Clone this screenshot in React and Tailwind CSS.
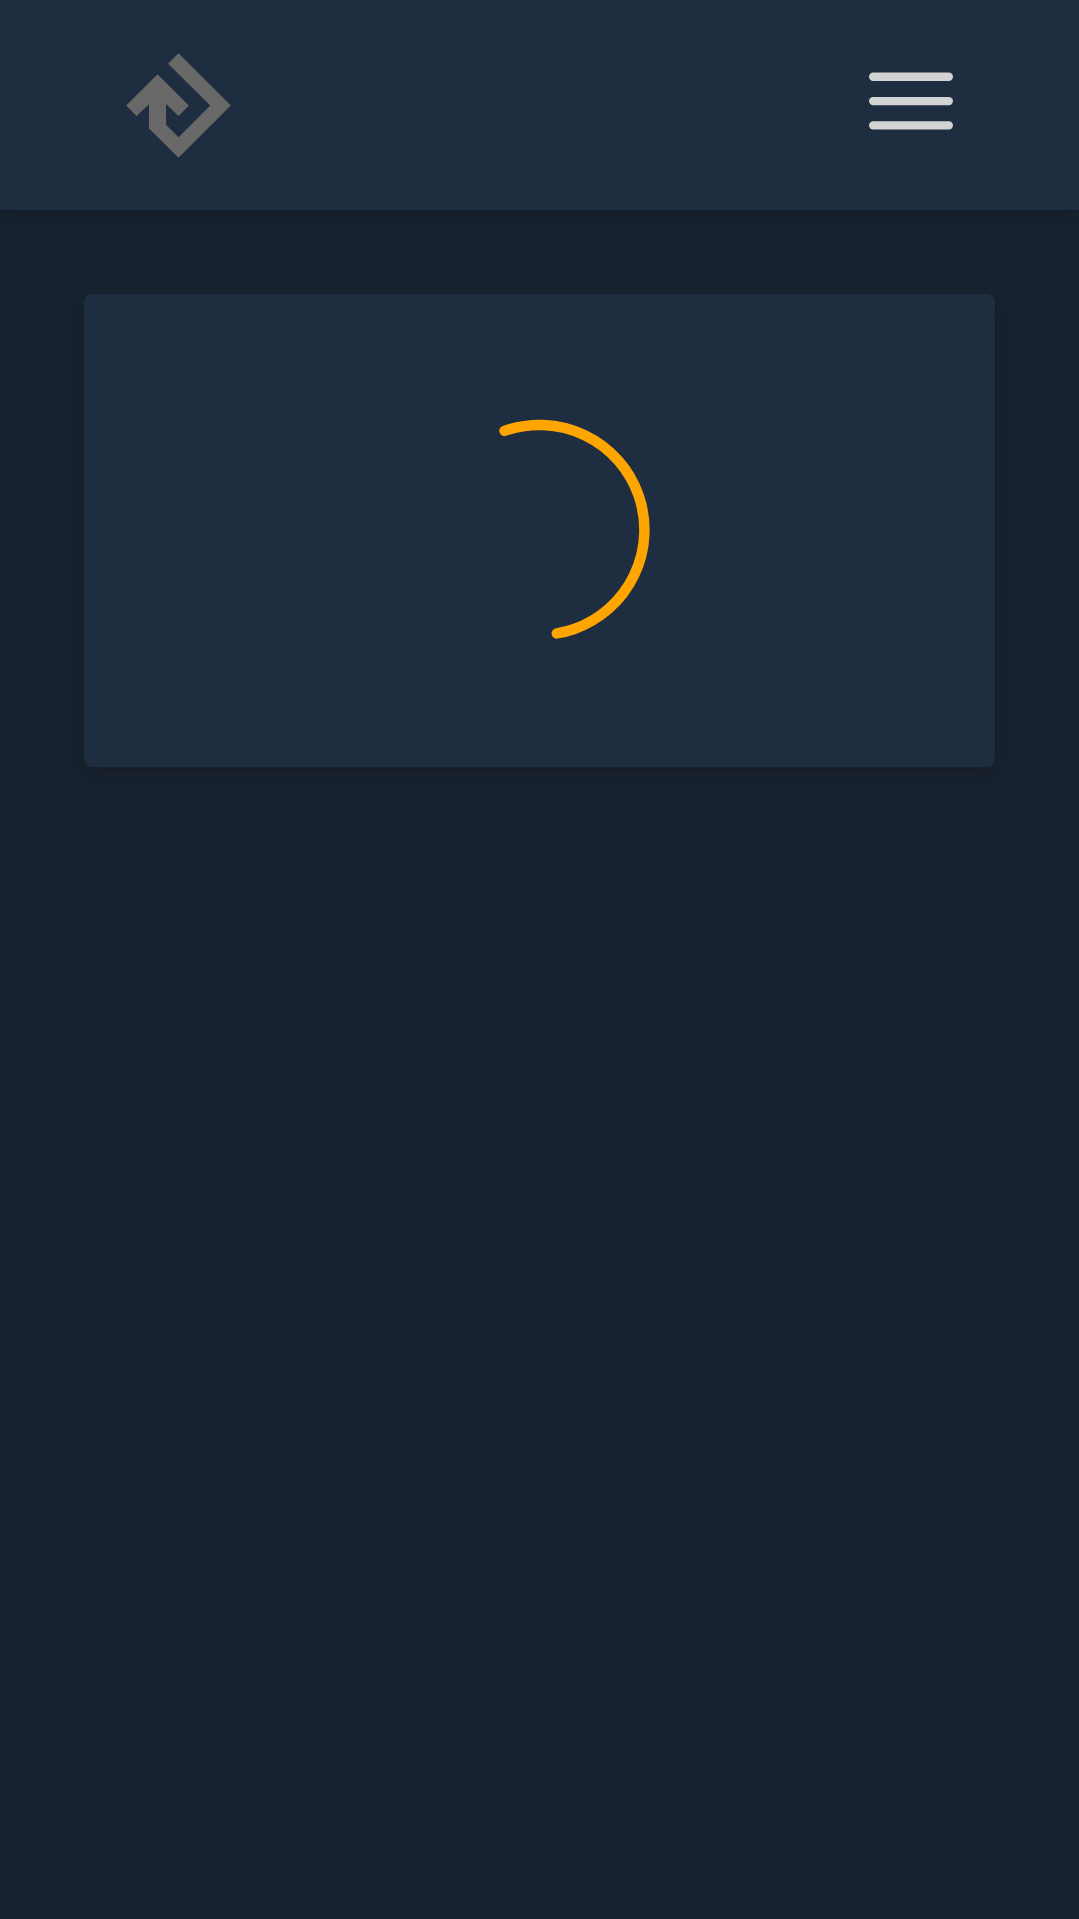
function Logo() {
  return (
    <svg className="h-[105px] w-[105px]" viewBox="0 0 105 105" fill="#686868" aria-label="Logo">
      <path d="M52.5 0.2 L104.8 52.5 L52.5 104.8 L23 75.5 V51.2 L10.5 63.1 L0.2 52.5 L31.5 21.2 L62.8 52.5 L52.5 63.1 L40 50.9 V71.8 L52.5 84.3 L84.2 52.5 L42.1 10.8 Z" />
    </svg>
  );
}

function MenuIcon() {
  return (
    <svg className="h-[58px] w-[84px]" viewBox="0 0 84 58" fill="#d3d3d4">
      <rect x="0" y="0.6" width="84" height="8.4" rx="4.2" />
      <rect x="0" y="24.9" width="84" height="8.4" rx="4.2" />
      <rect x="0" y="49.2" width="84" height="8.4" rx="4.2" />
    </svg>
  );
}

function Spinner() {
  return (
    <svg className="h-[262px] w-[262px]" viewBox="0 0 262 262" fill="none">
      <circle
        cx="130.4"
        cy="129.9"
        r="105"
        stroke="#ffa500"
        strokeWidth="10.5"
        strokeLinecap="round"
        strokeDasharray="347.6 700"
        transform="rotate(-109.4 130.4 129.9)"
      />
    </svg>
  );
}

export default function App() {
  return (
    <div className="flex min-h-screen flex-col overflow-hidden bg-[#182230]">
      <header className="flex h-[210px] items-center justify-between bg-[#1f2d40] px-[126px] shadow-[0_5px_14px_rgba(22,30,38,0.9)]">
        <Logo />
        <button className="mb-2 block" aria-label="Menu">
          <MenuIcon />
        </button>
      </header>
      <main className="px-[84px] pt-[84px]">
        <section className="flex h-[473px] items-center justify-center rounded-lg bg-[#1f2d40] shadow-[0_5px_14px_rgba(22,30,38,0.9)]">
          <Spinner />
        </section>
      </main>
    </div>
  );
}
